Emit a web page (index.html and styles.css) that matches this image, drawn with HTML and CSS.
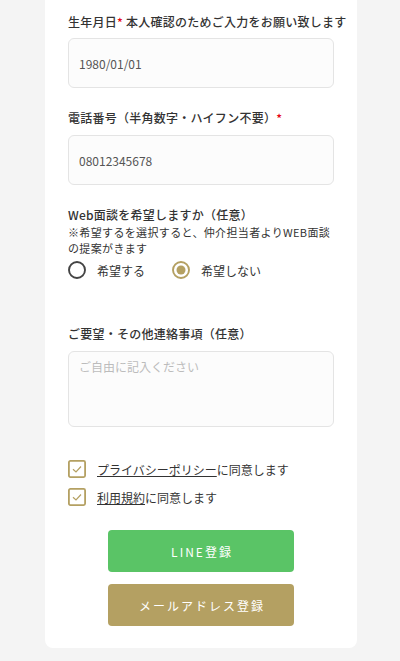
FILE: index.html
```html
<!DOCTYPE html>
<html lang="ja">
<head>
<meta charset="utf-8">
<title>Form</title>
<link rel="stylesheet" href="styles.css">
</head>
<body>
<div class="card">
  <div class="field">
    <div class="label nowrap">生年月日<span class="req">*</span> 本人確認のためご入力をお願い致します</div>
    <input class="input" type="text" value="1980/01/01">
  </div>
  <div class="field">
    <div class="label">電話番号（半角数字・ハイフン不要）<span class="req">*</span></div>
    <input class="input" type="text" value="08012345678">
  </div>
  <div class="field web">
    <div class="label">Web面談を希望しますか（任意）</div>
    <div class="note">※希望するを選択すると、仲介担当者よりWEB面談の提案がきます</div>
    <div class="radios">
      <label class="radio">
        <svg width="18" height="18" viewBox="0 0 18 18"><circle cx="9" cy="9" r="8" fill="#fff" stroke="#444" stroke-width="1.9"/></svg>
        <span>希望する</span>
      </label>
      <label class="radio">
        <svg width="18" height="18" viewBox="0 0 18 18"><circle cx="9" cy="9" r="8" fill="#fff" stroke="#b4a062" stroke-width="1.9"/><circle cx="9" cy="9" r="4.5" fill="#b4a062"/></svg>
        <span>希望しない</span>
      </label>
    </div>
  </div>
  <div class="field request">
    <div class="label">ご要望・その他連絡事項（任意）</div>
    <textarea class="textarea" placeholder="ご自由に記入ください"></textarea>
  </div>
  <div class="agree">
    <label class="check">
      <svg width="18" height="18" viewBox="0 0 18 18"><rect x="0.9" y="0.9" width="16.2" height="16.2" rx="1.5" fill="#fff" stroke="#b4a062" stroke-width="1.8"/><polyline points="5,9.2 8,12 13,6.5" fill="none" stroke="#b4a062" stroke-width="1.2"/></svg>
      <span><a class="link">プライバシーポリシー</a>に同意します</span>
    </label>
    <label class="check">
      <svg width="18" height="18" viewBox="0 0 18 18"><rect x="0.9" y="0.9" width="16.2" height="16.2" rx="1.5" fill="#fff" stroke="#b4a062" stroke-width="1.8"/><polyline points="5,9.2 8,12 13,6.5" fill="none" stroke="#b4a062" stroke-width="1.2"/></svg>
      <span><a class="link">利用規約</a>に同意します</span>
    </label>
  </div>
  <div class="buttons">
    <button class="btn btn-line">LINE登録</button>
    <button class="btn btn-mail">メールアドレス登録</button>
  </div>
</div>
</body>
</html>
```
FILE: styles.css
```css
html, body {
  margin: 0;
  padding: 0;
}
body {
  background: #f4f4f4;
  font-family: "Noto Sans CJK JP", "Noto Sans", sans-serif;
  color: #333;
}
.card {
  box-sizing: border-box;
  width: 312px;
  margin-left: 45px;
  background: #fff;
  border-radius: 0 0 8px 8px;
  padding: 13px 23px 22px;
}
.field {
  display: flex;
  flex-direction: column;
  margin-bottom: 21px;
}
.label {
  font-size: 12px;
  letter-spacing: 0.25px;
  line-height: 18px;
  font-weight: 500;
  color: #333;
  margin-bottom: 7px;
}
.nowrap {
  white-space: nowrap;
}
.req {
  color: #e60012;
}
.input {
  box-sizing: border-box;
  width: 266px;
  height: 50px;
  border: 1px solid #e4e4e4;
  border-radius: 6px;
  background: #fcfcfc;
  padding: 0 10px;
  font-family: "Noto Sans CJK JP", "Noto Sans", sans-serif;
  font-size: 12px;
  color: #555;
  outline: none;
}
.field + .field .label {
  margin-bottom: 8px;
}
.field.web .label {
  margin-bottom: 0;
}
.note {
  font-size: 11px;
  letter-spacing: 0.35px;
  line-height: 16px;
  color: #333;
  width: 266px;
}
.radios {
  display: flex;
  gap: 27px;
  margin-top: 4px;
  height: 20px;
  align-items: center;
}
.radio {
  display: flex;
  align-items: center;
  gap: 11px;
  font-size: 12px;
  color: #333;
}
.radio svg {
  display: block;
}
.field.web {
  margin-bottom: 45px;
}
.textarea {
  box-sizing: border-box;
  width: 266px;
  height: 76px;
  border: 1px solid #e4e4e4;
  border-radius: 6px;
  background: #fcfcfc;
  padding: 6px 10px;
  font-family: "Noto Sans CJK JP", "Noto Sans", sans-serif;
  font-size: 12px;
  color: #555;
  resize: none;
  outline: none;
  display: block;
}
.textarea::placeholder {
  color: #bcbcbc;
}
.field.request {
  margin-bottom: 33px;
}
.agree {
  display: flex;
  flex-direction: column;
  gap: 10px;
}
.check {
  display: flex;
  align-items: center;
  gap: 11px;
  font-size: 12px;
  color: #333;
  height: 18px;
}
.check svg {
  display: block;
}
.link {
  color: #333;
  text-decoration: underline;
}
.buttons {
  display: flex;
  flex-direction: column;
  align-items: center;
  gap: 12px;
  margin-top: 24px;
}
.btn {
  width: 186px;
  height: 42px;
  border: none;
  border-radius: 4px;
  color: #fff;
  font-family: "Noto Sans CJK JP", "Noto Sans", sans-serif;
  font-size: 12px;
  font-weight: 400;
  letter-spacing: 2px;
  padding: 0 0 0 2px;
}
.btn-line {
  background: #5ac466;
}
.btn-mail {
  background: #b4a062;
}
```
